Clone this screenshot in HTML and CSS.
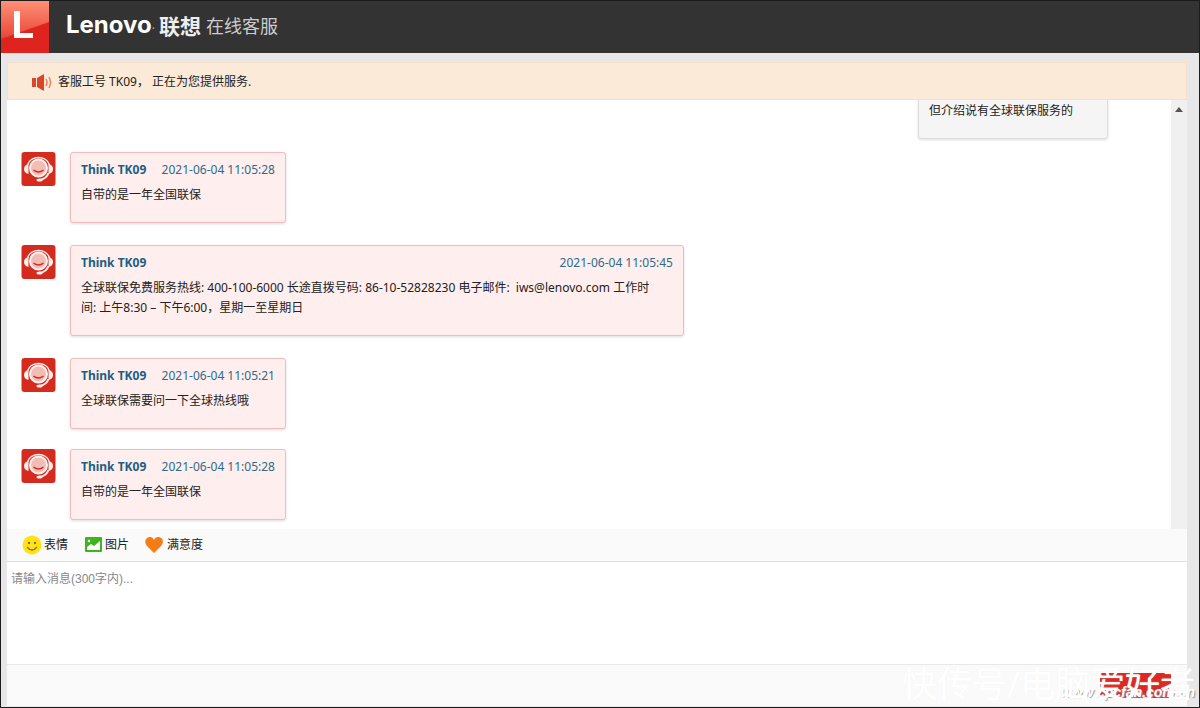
FILE: index.html
```
<!DOCTYPE html>
<html lang="zh-CN">
<head>
<meta charset="utf-8">
<meta name="viewport" content="width=device-width, initial-scale=1">
<title>Lenovo 联想 在线客服</title>
<link rel="stylesheet" href="styles.css">
</head>
<body>
<svg width="0" height="0" class="defs" aria-hidden="true">
  <symbol id="agent" viewBox="0 0 34 34">
    <rect width="34" height="34" rx="3" fill="#d52b1e"/>
    <path d="M6 13C9 3 25 3 28 13" fill="none" stroke="#fff0ee" stroke-width="1.5"/>
    <path d="M7 12C1 13 1 21 7 22ZM27 12C33 13 33 21 27 22Z" fill="#fff0ee"/>
    <circle cx="17" cy="16" r="8.5" fill="#f3bdb7" stroke="#fff0ee" stroke-width="2"/>
    <path d="M12 18Q17 22 22 18" fill="none" stroke="#d52b1e" stroke-width="1.5"/>
    <path d="M27 21Q25 27 18 28" fill="none" stroke="#fff0ee" stroke-width="2"/>
    <ellipse cx="18" cy="28" rx="3" ry="1.5" fill="#fff0ee"/>
  </symbol>
</svg>
<div class="app">
  <header class="header">
    <svg class="mark" viewBox="0 0 48 52" role="img" aria-label="L">
      <defs>
        <linearGradient id="gloss" x1="0" y1="0" x2="0" y2="1"><stop offset="0" stop-color="#ff9077"/><stop offset="1" stop-color="#e84535"/></linearGradient>
      </defs>
      <rect width="48" height="52" fill="#df241f"/>
      <path d="M0 0H48V21L0 38Z" fill="url(#gloss)"/>
      <path d="M13 10H19V32H32V37H13Z" fill="#fff"/>
    </svg>
    <h1 class="brand"><span class="brand-en">Lenovo</span><span class="brand-dot">.</span><span class="brand-cn">联想</span><span class="brand-service">在线客服</span></h1>
  </header>
  <main class="panel">
    <div class="notice">
      <svg class="speaker" viewBox="0 0 20 18" aria-hidden="true">
        <path d="M0 5H4V14H0ZM5 5L12 1V18L5 14Z" fill="#d9472b"/>
        <path d="M14 6Q16 9.500 14 13M17 4Q20 9.500 17 15" fill="none" stroke="#e88757" stroke-width="1.5"/>
      </svg>
      <span>客服工号 TK09， 正在为您提供服务.</span>
    </div>
    <section class="chat">
      <div class="log">
        <article class="msg msg-own"><div class="bubble bubble-own"><p class="text">但介绍说有全球联保服务的</p></div></article>
        <article class="msg">
          <svg class="avatar"><use href="#agent"/></svg>
          <div class="bubble"><div class="meta"><b>Think TK09</b><time>2021-06-04 11:05:28</time></div><p class="text">自带的是一年全国联保</p></div>
        </article>
        <article class="msg">
          <svg class="avatar"><use href="#agent"/></svg>
          <div class="bubble"><div class="meta"><b>Think TK09</b><time>2021-06-04 11:05:45</time></div><p class="text">全球联保免费服务热线: 400-100-6000 长途直拨号码: 86-10-52828230 电子邮件:&nbsp; iws@lenovo.com 工作时间: 上午8:30 – 下午6:00，星期一至星期日</p></div>
        </article>
        <article class="msg">
          <svg class="avatar"><use href="#agent"/></svg>
          <div class="bubble"><div class="meta"><b>Think TK09</b><time>2021-06-04 11:05:21</time></div><p class="text">全球联保需要问一下全球热线哦</p></div>
        </article>
        <article class="msg msg-last">
          <svg class="avatar"><use href="#agent"/></svg>
          <div class="bubble"><div class="meta"><b>Think TK09</b><time>2021-06-04 11:05:28</time></div><p class="text">自带的是一年全国联保</p></div>
        </article>
      </div>
      <div class="scrollbar"><svg viewBox="0 0 8 5" class="arrow"><path d="M0 5L4 0L8 5Z" fill="#555"/></svg></div>
    </section>
    <div class="toolbar">
      <button type="button" class="tool">
        <svg class="icon" viewBox="0 0 20 20" aria-hidden="true"><circle cx="10" cy="10" r="9.5" fill="#fde21a"/><circle cx="7" cy="8" r="1.2" fill="#8a6a10"/><circle cx="13" cy="8" r="1.2" fill="#8a6a10"/><path d="M5 12Q10 18 15 12" fill="none" stroke="#9a7614" stroke-width="1.4"/></svg>表情
      </button>
      <button type="button" class="tool">
        <svg class="icon" viewBox="0 0 20 20" aria-hidden="true"><rect x="2" y="2" width="17" height="15" rx="1" fill="#3fb51c"/><path d="M4 15V12L8 9L11 11L17 6V15Z" fill="#fff"/><circle cx="6" cy="6" r="1.3" fill="#fff"/></svg>图片
      </button>
      <button type="button" class="tool tool-rate">
        <svg class="icon" viewBox="0 0 20 20" aria-hidden="true"><path d="M10 18L3 11C-1 6 3 2 6 2Q9 2 10 5Q11 2 14 2C18 2 21 6 17 11Z" fill="#f57c14"/></svg>满意度
      </button>
    </div>
    <textarea class="input" aria-label="消息" placeholder="请输入消息(300字内)..." autofocus></textarea>
    <footer class="footer"><button type="button" class="send" aria-label="发送"></button></footer>
  </main>
  <div class="watermark-url">www.cpcfan.com.cn</div>
  <div class="watermark">快传号/电脑爱好者</div>
</div>
</body>
</html>
```
FILE: styles.css
```
* { box-sizing: border-box; }
body {
  margin: 0;
  font: 12px/20px "Noto Sans", "Noto Sans CJK SC", sans-serif;
  color: #222;
}
.defs { position: absolute; }
.app {
  position: relative;
  display: flex;
  flex-direction: column;
  height: 100vh;
  overflow: hidden;
  border: 1px solid #1c1c1c;
  background: #e7e7e8;
}
.header {
  display: flex;
  flex: none;
  height: 52px;
  background: #333;
}
.mark { width: 48px; height: 52px; }
.brand {
  display: flex;
  align-items: center;
  margin: 0 0 4px 17px;
  font-weight: 400;
  color: #fff;
}
.brand-en { font: 700 24px/32px Inter, sans-serif; }
.brand-dot { font-size: 12px; color: #aaa; }
.brand-cn { margin-left: 4px; font: 700 21px/32px "Noto Sans CJK SC", sans-serif; color: #eee; }
.brand-service { margin-left: 5px; font: 400 18px/32px "Noto Sans CJK SC", sans-serif; color: #ccc; }
.panel {
  display: flex;
  flex: 1;
  flex-direction: column;
  min-height: 0;
  margin: 9px 12px 1px 6px;
}
.notice {
  display: flex;
  flex: none;
  align-items: center;
  gap: 6px;
  height: 38px;
  padding: 2px 0 0 24px;
  border: 1px solid #f5dfc8;
  background: #faead7;
}
.speaker { width: 20px; height: 18px; }
.chat {
  display: flex;
  flex: 1;
  min-height: 0;
  overflow: hidden;
  background: #fff;
}
.log {
  display: flex;
  flex: 1;
  flex-direction: column;
  justify-content: flex-end;
  gap: 22px;
  padding: 0 0 9px 14px;
}
.msg { display: flex; flex: none; align-items: flex-start; gap: 14px; }
.msg-own { justify-content: flex-end; margin: 0 63px -9px 0; }
.msg-last { margin-top: -2px; }
.avatar { flex: none; width: 35px; height: 34px; }
.bubble {
  min-width: 216px;
  max-width: 614px;
  padding: 7px 10px 17px;
  border: 1px solid #f2bcbc;
  border-radius: 3px;
  background: #feeeee;
  box-shadow: 0 1px 3px #ddd;
}
.bubble-own {
  min-width: 190px;
  border-color: #ddd;
  background: #f5f5f5;
}
.meta {
  display: flex;
  justify-content: space-between;
  margin-bottom: 5px;
  color: #2d6b8a;
}
.meta b { color: #1c5f82; }
.text { margin: 0; padding-right: 12px; }
.scrollbar {
  display: flex;
  flex: none;
  justify-content: center;
  width: 16px;
  padding-top: 7px;
  background: #f0f0f0;
}
.arrow { width: 8px; height: 5px; }
.toolbar {
  display: flex;
  flex: none;
  gap: 15px;
  height: 33px;
  padding-left: 15px;
  border-bottom: 1px solid #e0e0e0;
  background: #fafafa;
}
.tool {
  display: flex;
  align-items: center;
  padding: 0;
  border: 0;
  background: none;
  font: inherit;
  color: #222;
}
.icon { width: 20px; height: 20px; margin-right: 2px; }
.tool-rate .icon { margin-right: 3px; }
.input {
  flex: none;
  height: 102px;
  padding: 8px 4px;
  border: 0;
  outline: 0;
  resize: none;
  background: #fff;
  font: 12px/18px "Liberation Sans", "Noto Sans CJK SC", sans-serif;
}
.input::placeholder { color: #888; }
.footer {
  display: flex;
  flex: none;
  justify-content: flex-end;
  height: 42px;
  padding: 8px 16px 0 0;
  border-top: 1px solid #e8e8e8;
  background: #fafafa;
}
.send {
  width: 71px;
  height: 25px;
  border: 0;
  border-radius: 2px;
  background: #dc2a22;
}
.watermark,
.watermark-url {
  position: absolute;
  right: 4px;
  bottom: 0;
  color: #fff;
  white-space: nowrap;
  pointer-events: none;
}
.watermark { font-size: 35px; line-height: 46px; text-shadow: 0 0 1px #f4f4f4; }
.watermark-url {
  font: italic 700 14px/30px "Liberation Sans", sans-serif;
  text-shadow: 1px 1px 1px #999;
}
```
